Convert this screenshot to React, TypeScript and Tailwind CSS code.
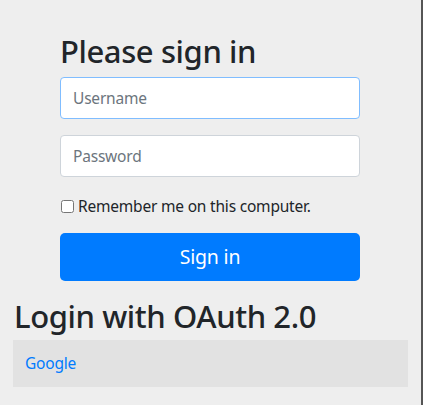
import React from "react";

export default function App() {
  const font = { fontFamily: '"Noto Sans", "Open Sans", sans-serif' };
  return (
    <div className="flex w-[423px] h-[405px] bg-[#eeeeee] text-[#212529]" style={font}>
      <div className="w-[421px] flex flex-col">
        <div className="w-[300px] ml-[60px] pt-[32px]">
          <h2 className="text-[31px] leading-[38px] font-medium mb-[7px] tracking-[-0.4px]">Please sign in</h2>
          <input
            className="block w-full h-[42px] px-[12px] text-[15.5px] tracking-[-0.2px] bg-white border border-[#80bdff] rounded-[4px] outline-none placeholder:text-[#6c757d]"
            placeholder="Username"
          />
          <input
            className="block w-full h-[42px] mt-[16px] px-[12px] text-[15.5px] tracking-[-0.2px] bg-white border border-[#ced4da] rounded-[4px] outline-none placeholder:text-[#6c757d]"
            placeholder="Password"
            type="password"
          />
          <label className="flex items-center mt-[20px] h-[18px] text-[15.5px] tracking-[-0.2px] leading-[18px]">
            <input type="checkbox" className="w-[13px] h-[13px] ml-[1px] mr-[4px]" />
            Remember me on this computer.
          </label>
          <button className="block w-full h-[48px] mt-[18px] bg-[#007bff] text-white text-[19.5px] tracking-[-0.2px] rounded-[5px]">
            Sign in
          </button>
        </div>
        <div className="px-[13px] w-full">
          <h2 className="text-[31px] leading-[38px] font-medium mt-[16px] pl-[1px] mb-[5px] tracking-[-0.4px]">Login with OAuth 2.0</h2>
          <div className="bg-[#e2e2e2] h-[47px] flex items-center px-[12px]">
            <a href="#" className="text-[#007bff] text-[15.5px] tracking-[-0.2px]">Google</a>
          </div>
        </div>
      </div>
      <div className="w-[2px] bg-[#555555]" />
    </div>
  );
}
